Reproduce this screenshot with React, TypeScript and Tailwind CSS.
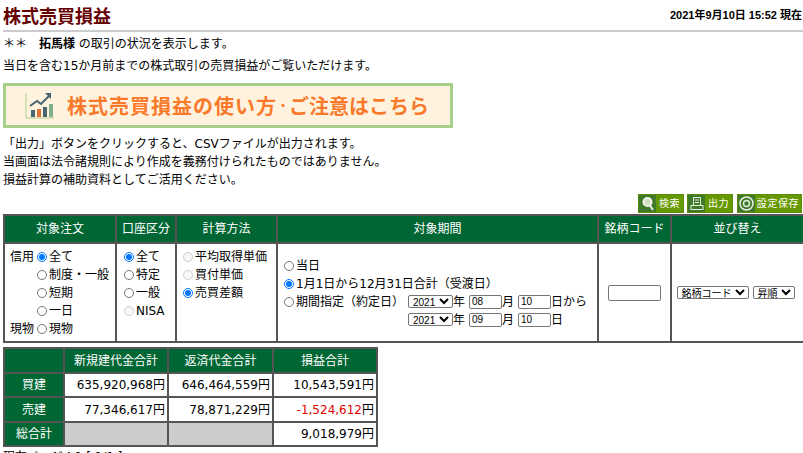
import * as React from "react";

function Radio({ checked = false, disabled = false }: { checked?: boolean; disabled?: boolean }) {
	return (
		<input
			type="radio"
			checked={checked}
			disabled={disabled}
			readOnly
			className="appearance-auto w-[10px] h-[10px] m-0 mr-[2px] shrink-0"
		/>
	);
}

function Opt({ label, checked, disabled }: { label: string; checked?: boolean; disabled?: boolean }) {
	return (
		<div className="flex items-center h-[18px]">
			<Radio checked={checked} disabled={disabled} />
			<span className="whitespace-nowrap">{label}</span>
		</div>
	);
}

function ToolButton({ label, w, iconW, icon }: { label: string; w: string; iconW: string; icon: React.ReactNode }) {
	return (
		<div className={`flex h-[19px] ${w} bg-[#669900] border border-[#5a8a08] text-white text-[10px]`}>
			<div className={`${iconW} bg-[#3f7a2a] flex items-center justify-center shrink-0`}>{icon}</div>
			<div className="flex-1 flex items-center justify-center tracking-[0.6px] whitespace-nowrap">{label}</div>
		</div>
	);
}

const th = "bg-[#006633] text-white font-normal border-2 border-[#555] text-center";
const td = "border-2 border-[#555] bg-white";
const field = "border border-[#767676] rounded-[2px] text-[10px] bg-white font-['Liberation_Sans','Noto_Sans_CJK_JP',sans-serif]";

function DateRow({ month, day, suffix }: { month: string; day: string; suffix: string }) {
	return (
		<div className="flex items-center h-[18px] pl-[124px]">
			<select className={`appearance-auto w-[45px] h-[13px] ${field}`} defaultValue="2021">
				<option>2021</option>
			</select>
			<span>年</span>
			<input readOnly value={month} className={`w-[33px] h-[14px] px-[2px] ml-[4px] ${field}`} />
			<span>月</span>
			<input readOnly value={day} className={`w-[33px] h-[14px] px-[2px] ml-[4px] ${field}`} />
			<span>{suffix}</span>
		</div>
	);
}

export default function App() {
	return (
		<div className="w-[803px] h-[453px] overflow-hidden bg-white text-black text-[12px] leading-[18px] font-['DejaVu_Sans','Noto_Sans_CJK_JP',sans-serif]">
			<div className="flex items-center justify-between h-[32px] ml-[3px] border-b-2 border-[#ccc]">
				<h1 className="text-[18px] font-bold text-[#660000] font-['Noto_Sans_CJK_JP',sans-serif]">株式売買損益</h1>
				<div className="text-[11px] font-bold mr-[1px] font-['Liberation_Sans','Noto_Sans_CJK_JP',sans-serif]">2021年9月10日 15:52 現在</div>
			</div>
			<div className="ml-[3px] mt-[3px] h-[18px] whitespace-pre">＊＊　<b>拓馬様</b> の取引の状況を表示します。</div>
			<div className="ml-[3px] mt-[4px] h-[18px]">当日を含む15か月前までの株式取引の売買損益がご覧いただけます。</div>
			<div className="ml-[3px] mt-[8px] w-[450px] h-[45px] border-[3px] border-[#a8cf8a] bg-[#fff3e0] flex items-center">
				<svg width="30" height="28" viewBox="0 0 30 28" className="ml-[19px] mr-[12px] shrink-0">
					<path d="M1 1V26H29" fill="none" stroke="#a8cf8a" strokeWidth="1" />
					<rect x="6" y="18" width="4" height="7" fill="#4a6470" />
					<rect x="12" y="17" width="4" height="8" fill="#e0703a" />
					<rect x="18" y="15" width="4" height="10" fill="#4a6470" />
					<rect x="24" y="12" width="4" height="13" fill="#7fb08a" />
					<path d="M5 14L12 9L16 12L25 3" fill="none" stroke="#4a6470" strokeWidth="2" />
					<path d="M20 1H26V7Z" fill="#4a6470" />
				</svg>
				<div className="flex items-center text-[#f97a2a] text-[20px] font-bold whitespace-nowrap font-['Noto_Sans_CJK_JP',sans-serif]">
					<span className="tracking-[1px]">株式売買損益の使い方</span>
					<span className="w-[12px] shrink-0 text-[12px] text-center">・</span>
					<span>ご注意はこちら</span>
				</div>
			</div>
			<div className="ml-[3px] mt-[7px]">
				<div className="h-[18px]">「出力」ボタンをクリックすると、CSVファイルが出力されます。</div>
				<div className="h-[18px]">当画面は法令諸規則により作成を義務付けられたものではありません。</div>
				<div className="h-[18px]">損益計算の補助資料としてご活用ください。</div>
			</div>
			<div className="flex justify-end gap-[3px] mt-[5px] mr-[1px] h-[19px]">
				<ToolButton label="検索" w="w-[46px]" iconW="w-[17px]" icon={<svg width="14" height="15" viewBox="0 0 14 15"><circle cx="6.5" cy="6" r="4" fill="#cfe0c0" stroke="#f0f4ea" strokeWidth="2" /><path d="M9 9.5L12 14" stroke="#f0f4ea" strokeWidth="2" /></svg>} />
				<ToolButton label="出力" w="w-[46px]" iconW="w-[17px]" icon={<svg width="14" height="15" viewBox="0 0 14 15"><path d="M3.5 9V1.5H10.5V9" fill="none" stroke="#e8efe0" /><rect x="1" y="9.5" width="12" height="4" fill="none" stroke="#e8efe0" /><path d="M5 4H9M5 6.500H9" stroke="#e8efe0" /></svg>} />
				<ToolButton label="設定保存" w="w-[65px] ml-[1px]" iconW="w-[17px]" icon={<svg width="15" height="15" viewBox="0 0 15 15"><circle cx="7.500" cy="7.500" r="6.500" fill="none" stroke="#e8efe0" strokeWidth="1.500" /><circle cx="7.500" cy="7.500" r="3" fill="none" stroke="#e8efe0" strokeWidth="1.500" /></svg>} />
			</div>
			<table className="ml-[3px] mt-[1px] w-[800px] border-collapse table-fixed">
				<colgroup>
					<col className="w-[112px]" />
					<col className="w-[60px]" />
					<col className="w-[101px]" />
					<col className="w-[321px]" />
					<col className="w-[73px]" />
					<col className="w-[133px]" />
				</colgroup>
				<thead>
					<tr className="h-[28px]">
						<th className={th}>対象注文</th>
						<th className={th}>口座区分</th>
						<th className={th}>計算方法</th>
						<th className={th}>対象期間</th>
						<th className={th}>銘柄コード</th>
						<th className={th}>並び替え</th>
					</tr>
				</thead>
				<tbody>
					<tr className="h-[99px]">
						<td className={`${td} align-top pt-[4px]`}>
							<div className="flex">
								<div className="w-[32px] pl-[5px] whitespace-nowrap flex flex-col">
									<div className="h-[18px]">信用</div>
									<div className="h-[54px]" />
									<div className="h-[18px]">現物</div>
								</div>
								<div>
									<Opt label="全て" checked />
									<Opt label="制度・一般" />
									<Opt label="短期" />
									<Opt label="一日" />
									<Opt label="現物" />
								</div>
							</div>
						</td>
						<td className={`${td} align-top pt-[4px] pl-[7px]`}>
							<Opt label="全て" checked />
							<Opt label="特定" />
							<Opt label="一般" />
							<Opt label="NISA" disabled />
						</td>
						<td className={`${td} align-top pt-[4px] pl-[6px]`}>
							<Opt label="平均取得単価" disabled />
							<Opt label="買付単価" disabled />
							<Opt label="売買差額" checked />
						</td>
						<td className={`${td} align-middle pl-[6px]`}>
							<Opt label="当日" />
							<Opt label="1月1日から12月31日合計（受渡日）" checked />
							<Opt label="期間指定（約定日）" />
							<div className="h-[18px]" />
							<div className="mt-[-36px]">
								<DateRow month="08" day="10" suffix="日から" />
								<DateRow month="09" day="10" suffix="日" />
							</div>
						</td>
						<td className={`${td} text-center`}>
							<input readOnly className="w-[53px] h-[16px] border border-[#767676] rounded-[2px] align-middle" />
						</td>
						<td className={`${td} text-center whitespace-nowrap pr-[4px]`}>
							<select className="appearance-auto w-[72px] h-[13px] border border-[#767676] rounded-[2px] text-[10px] bg-white" defaultValue="a">
								<option value="a">銘柄コード</option>
							</select>
							<select className="appearance-auto w-[42px] h-[13px] border border-[#767676] rounded-[2px] text-[10px] bg-white ml-[4px]" defaultValue="a">
								<option value="a">昇順</option>
							</select>
						</td>
					</tr>
				</tbody>
			</table>
			<table className="ml-[3px] mt-[4px] w-[375px] border-collapse table-fixed">
				<colgroup>
					<col className="w-[60px]" />
					<col className="w-[104px]" />
					<col className="w-[105px]" />
					<col className="w-[104px]" />
				</colgroup>
				<tbody>
					<tr className="h-[25px]">
						<th className={th} />
						<th className={th}>新規建代金合計</th>
						<th className={th}>返済代金合計</th>
						<th className={th}>損益合計</th>
					</tr>
					<tr className="h-[24px]">
						<th className={th}>買建</th>
						<td className={`${td} text-right pr-[2px]`}>635,920,968円</td>
						<td className={`${td} text-right pr-[2px]`}>646,464,559円</td>
						<td className={`${td} text-right pr-[2px]`}>10,543,591円</td>
					</tr>
					<tr className="h-[25px]">
						<th className={th}>売建</th>
						<td className={`${td} text-right pr-[2px]`}>77,346,617円</td>
						<td className={`${td} text-right pr-[2px]`}>78,871,229円</td>
						<td className={`${td} text-right pr-[2px]`}><span className="text-[#dd0000]">-1,524,612</span>円</td>
					</tr>
					<tr className="h-[24px]">
						<th className={th}>総合計</th>
						<td className="border-2 border-[#555] bg-[#cccccc]" />
						<td className="border-2 border-[#555] bg-[#cccccc]" />
						<td className={`${td} text-right pr-[2px]`}>9,018,979円</td>
					</tr>
				</tbody>
			</table>
			<div className="ml-[3px] mt-[1px]">現在ページ：1 [ 1/1 ]</div>
		</div>
	);
}
